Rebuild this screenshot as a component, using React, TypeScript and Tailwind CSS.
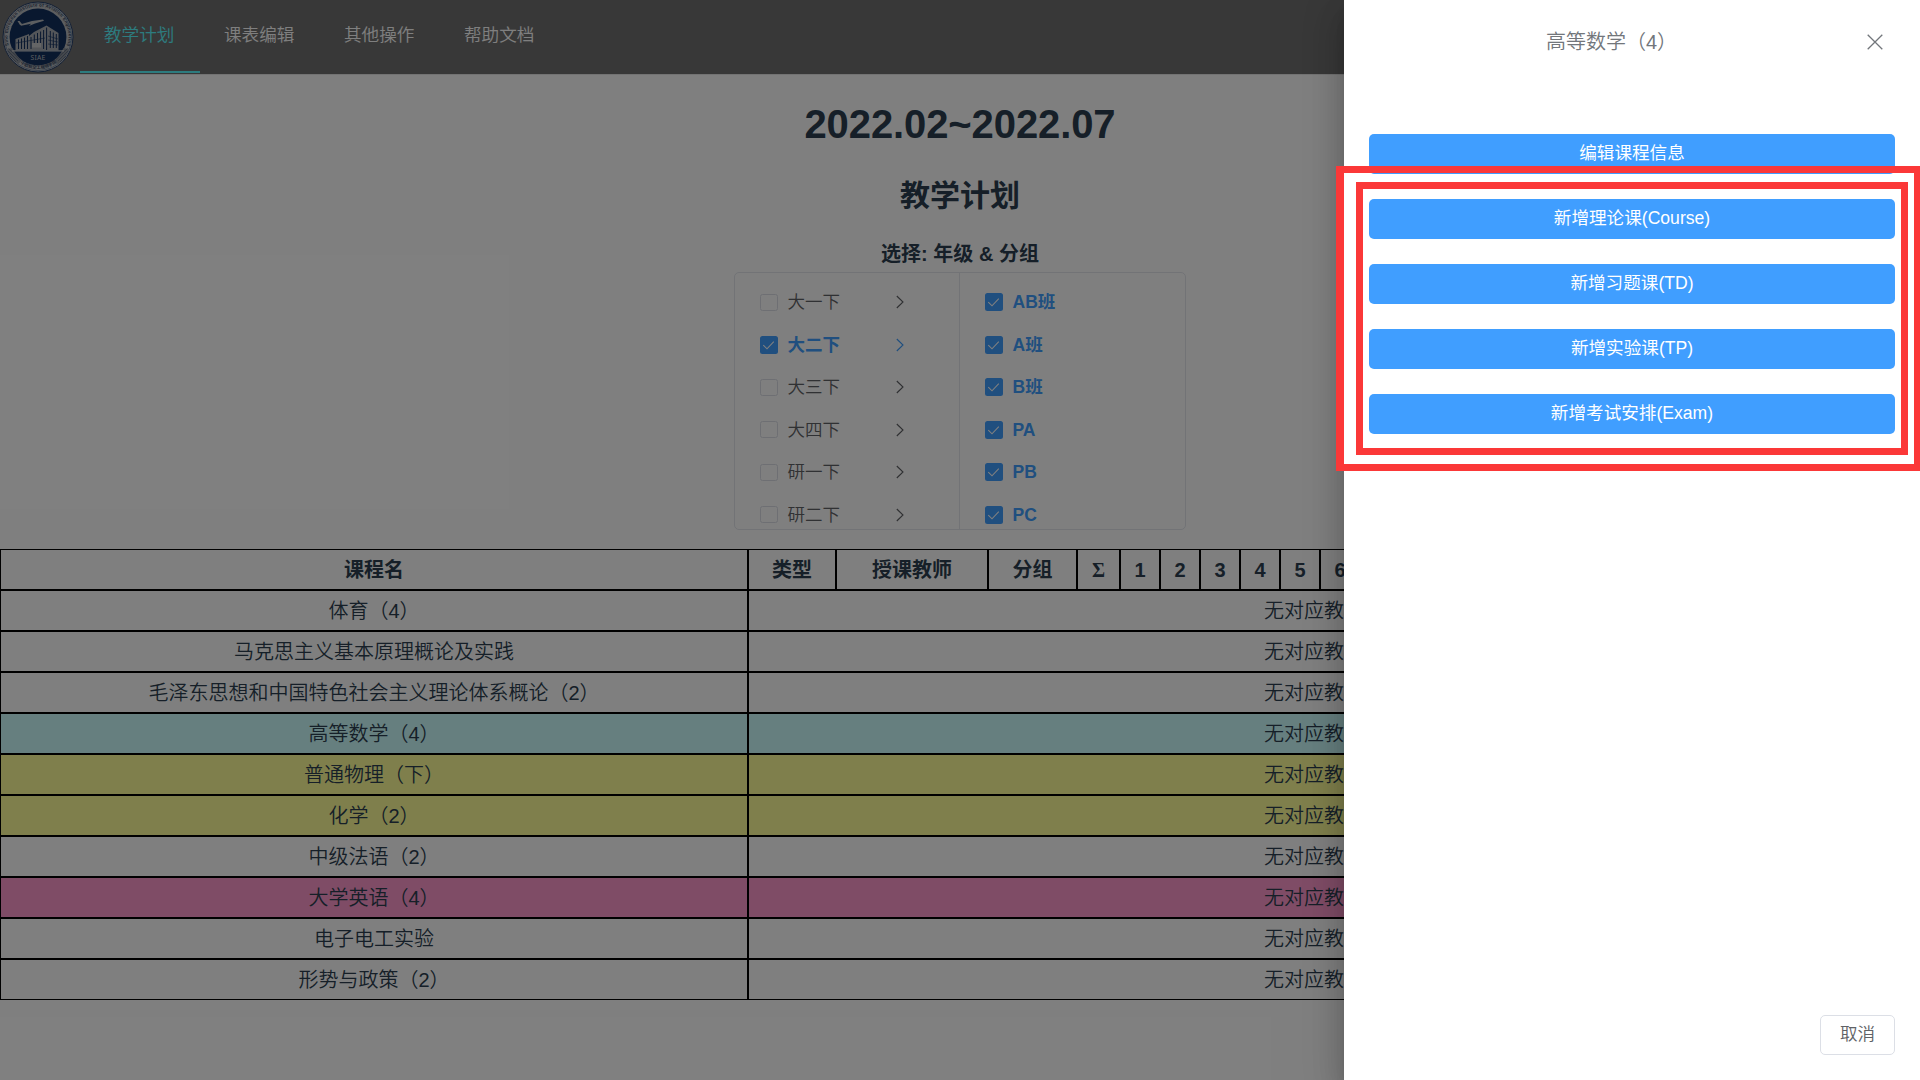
import React from 'react';

const menu = ['教学计划', '课表编辑', '其他操作', '帮助文档'];
const grades = ['大一下', '大二下', '大三下', '大四下', '研一下', '研二下'];
const groups = ['AB班', 'A班', 'B班', 'PA', 'PB', 'PC'];
const courses: { name: string; bg: string }[] = [
  { name: '体育（4）', bg: '' },
  { name: '马克思主义基本原理概论及实践', bg: '' },
  { name: '毛泽东思想和中国特色社会主义理论体系概论（2）', bg: '' },
  { name: '高等数学（4）', bg: 'bg-[#ccffff]' },
  { name: '普通物理（下）', bg: 'bg-[#ffff99]' },
  { name: '化学（2）', bg: 'bg-[#ffff99]' },
  { name: '中级法语（2）', bg: '' },
  { name: '大学英语（4）', bg: 'bg-[#ff99cc]' },
  { name: '电子电工实验', bg: '' },
  { name: '形势与政策（2）', bg: '' },
];
const weeks = Array.from({ length: 20 }, (_, i) => i + 1);
const actions = ['编辑课程信息', '新增理论课(Course)', '新增习题课(TD)', '新增实验课(TP)', '新增考试安排(Exam)'];

function Logo() {
  return (
    <svg viewBox="0 0 72 72" className="mt-px h-[72px] w-[72px]">
      <defs>
        <path id="ringTop" d="M7 45.4 A30.5 30.5 0 1 1 65 45.4" />
        <path id="ringBottom" d="M17.5 62 A32 32 0 0 0 54.5 62" />
      </defs>
      <circle cx="36" cy="36" r="35" fill="#b9bcc0" stroke="#27406a" strokeWidth="1" />
      <circle cx="36" cy="36" r="33.6" fill="none" stroke="#33507a" strokeWidth="0.5" />
      <circle cx="36" cy="36" r="28.4" fill="#12305f" />
      <path d="M5 48 L10.5 47 Q14 54.5 20 59.5 L16 63 Q8 57 5 48Z M67 48 L61.5 47 Q58 54.5 52 59.5 L56 63 Q64 57 67 48Z" fill="#8b9099" />
      <path d="M6 50 L16 60 M8 55 L14 61 M6.5 47.5 L18 58.5 M66 50 L56 60 M64 55 L58 61 M65.5 47.5 L54 58.5" stroke="#4c5b75" strokeWidth="0.7" />
      <path d="M18 23.5 L30 20 L41 18.5 L42 19.8 L33 22.5 L27 25 L29 22.8 L19 24.8Z M15.5 20 L17.5 20 L20 23 L18 24Z" fill="#b9bcc0" />
      <path d="M13.5 49.5 L13.5 38 L27 33 L27 35 L32 31 L44.5 24.5 L56.5 32 L56.5 49.5Z" fill="#a9adb3" />
      <path d="M16.5 38.5V48 M19.5 37.5V48 M22.5 36.5V48 M25.5 35V48 M29 36V48 M32.3 33.5V42 M35.5 32V42 M38.6 30.5V42 M41.6 29V48 M44.6 26.5V49 M48.3 30V47 M51.3 31.5V47 M54.3 33V47" stroke="#12305f" strokeWidth="1" />
      <path d="M46 35 L56 38 M46 39 L56 41 M46 43 L56 44 M14 42 L43 37" stroke="#12305f" strokeWidth="0.6" />
      <rect x="30" y="42" width="9" height="4.5" fill="#c8cacc" />
      <rect x="10" y="49.3" width="52" height="1.2" fill="#c8cacc" />
      <text x="36" y="58.7" textAnchor="middle" fontSize="6.8" letterSpacing="0.2" fill="#b9bcc0" className="font-['Noto_Sans']">SIAE</text>
      <text fontSize="4.4" fontWeight="bold" fill="#33435c" textLength="113" className="font-['Liberation_Sans']">
        <textPath href="#ringTop" startOffset="1">Sino European Institute of Aviation Engineering</textPath>
      </text>
      <text fontSize="4.3" fontWeight="bold" fill="#33435c" className="font-['Noto_Sans_CJK_SC']">
        <textPath href="#ringBottom" startOffset="1">中欧航空工程师学院</textPath>
      </text>
    </svg>
  );
}

function Checkbox({ checked }: { checked: boolean }) {
  return checked ? (
    <span className="flex h-[18px] w-[18px] shrink-0 items-center justify-center rounded-[2.5px] bg-[#409eff]">
      <svg viewBox="0 0 18 18" className="h-[18px] w-[18px]" fill="none" stroke="#fff" strokeWidth="1.1">
        <path d="M3.3 9.2 L7 12.8 L13.8 5.7" />
      </svg>
    </span>
  ) : (
    <span className="h-[17px] w-[18px] shrink-0 rounded-[2.5px] border border-[#dcdfe6]" />
  );
}

function GradeRow({ label, checked, arrow }: { label: string; checked: boolean; arrow: boolean }) {
  return (
    <div className={`flex h-[42.5px] shrink-0 items-center pl-[25px] text-[17.5px] ${checked ? 'font-bold text-[#409eff]' : 'font-[350] text-[#606266]'}`}>
      <Checkbox checked={checked} />
      <span className="ml-[9.5px] w-[108px] leading-[42px]">{label}</span>
      {arrow && (
        <svg viewBox="0 0 8 14" className="h-[14px] w-[8px]" fill="none" stroke="currentColor" strokeWidth="1.1">
          <path d="M0.8 1 L7 7 L0.8 13" />
        </svg>
      )}
    </div>
  );
}

export default function App() {
  const cell = 'box-border border border-black px-0 pt-px pb-0 h-[41px] leading-[38px] text-center';
  return (
    <div className="relative h-[1080px] w-[1920px] overflow-hidden bg-white font-['Liberation_Sans','Noto_Sans_CJK_SC',sans-serif] text-[#2c3e50]">
      <header className="flex h-[75px] border-b border-[#e6e6e6] bg-[#707070] pl-[1.5px]">
        <Logo />
        <nav className="ml-[6.5px] flex h-[74px]">
          {menu.map((m, i) => (
            <div
              key={m}
              className={`flex h-[73px] w-[120px] border-b-2 pl-[24px] text-[17.6px] leading-[71px] ${i === 0 ? 'border-[#5bf8ff] text-[#5bf8ff]' : 'border-transparent text-white'} font-[350]`}
            >
              {m}
            </div>
          ))}
        </nav>
      </header>

      <main className="flex flex-col items-center">
        <h1 className="mt-[26px] h-[46px] text-[40px] leading-[46px] font-bold tracking-[-0.1px]">2022.02~2022.07</h1>
        <h2 className="mt-[29px] h-[40px] text-[30px] leading-[40px] font-bold">教学计划</h2>
        <h3 className="mt-[23px] h-[30px] text-[20px] leading-[31px] font-bold">选择: 年级 &amp; 分组</h3>
        <div className="mt-[3px] flex h-[258px] w-[452px] overflow-hidden rounded-[5px] border border-[#e4e7ed]">
          <div className="flex w-[225px] flex-col overflow-hidden border-r border-[#e4e7ed] pt-[8px]">
            {grades.map((g) => (
              <GradeRow key={g} label={g} checked={g === '大二下'} arrow />
            ))}
          </div>
          <div className="flex flex-1 flex-col overflow-hidden pt-[8px]">
            {groups.map((g) => (
              <GradeRow key={g} label={g} checked arrow={false} />
            ))}
          </div>
        </div>

        <table className="mt-[19px] w-[1920px] table-fixed border-separate border-spacing-0 text-[20px]">
          <colgroup>
            <col className="w-[748px]" />
            <col className="w-[88px]" />
            <col className="w-[152px]" />
            <col className="w-[89px]" />
            <col className="w-[43px]" />
            {weeks.map((w) => (
              <col key={w} className="w-[40px]" />
            ))}
          </colgroup>
          <thead>
            <tr>
              {['课程名', '类型', '授课教师', '分组'].map((h) => (
                <th key={h} className={cell}>{h}</th>
              ))}
              <th className={`${cell} font-['Liberation_Serif']`}>Σ</th>
              {weeks.map((w) => (
                <th key={w} className={cell}>{w}</th>
              ))}
            </tr>
          </thead>
          <tbody className="font-[350]">
            {courses.map((c) => (
              <tr key={c.name} className={c.bg}>
                <td className={cell}>{c.name}</td>
                <td colSpan={24} className={cell}>无对应教学计划</td>
              </tr>
            ))}
          </tbody>
        </table>
      </main>

      <div className="absolute inset-0 flex justify-end bg-black/50">
        <aside className="flex h-full w-[576px] flex-col bg-white shadow-[0_10px_12.5px_-6px_rgba(0,0,0,0.2),0_20px_30px_2.5px_rgba(0,0,0,0.14),0_7.5px_37.5px_6px_rgba(0,0,0,0.12)]">
          <div className="flex h-[134px] items-start pt-[25px] pr-[37px] pl-[12px] text-[20px] text-[#72767b]">
            <span className="flex-1 text-center leading-[35px] font-[350]">高等数学（4）</span>
            <svg viewBox="0 0 16 16" className="mt-[9px] h-[16px] w-[16px]" fill="none" stroke="currentColor" strokeWidth="1.3">
              <path d="M0.7 0.7 L15.3 15.3 M15.3 0.7 L0.7 15.3" />
            </svg>
          </div>
          <div className="flex flex-1 flex-col gap-[25px] px-[25px]">
            {actions.map((a) => (
              <button key={a} className="h-[40px] rounded-[5px] bg-[#409eff] text-center text-[17.6px] leading-[38px] text-white">
                <span className="block h-[40px]">{a}</span>
              </button>
            ))}
          </div>
          <div className="flex justify-end pr-[25px] pb-[25px]">
            <button className="h-[40px] w-[75px] rounded-[5px] border border-[#dcdfe6] bg-white text-[17.6px] leading-[36px] font-[350] text-[#606266]">
              <span className="block h-[38px]">取消</span>
            </button>
          </div>
        </aside>
      </div>

      <div className="absolute top-[166px] left-[1336px] h-[305px] w-[586px] border-[7px] border-r-[8px] border-l-[8px] border-[#fb3838]" />
      <div className="absolute top-[182px] left-[1356px] h-[273px] w-[552px] border-[7px] border-[#fb3838]" />
    </div>
  );
}
